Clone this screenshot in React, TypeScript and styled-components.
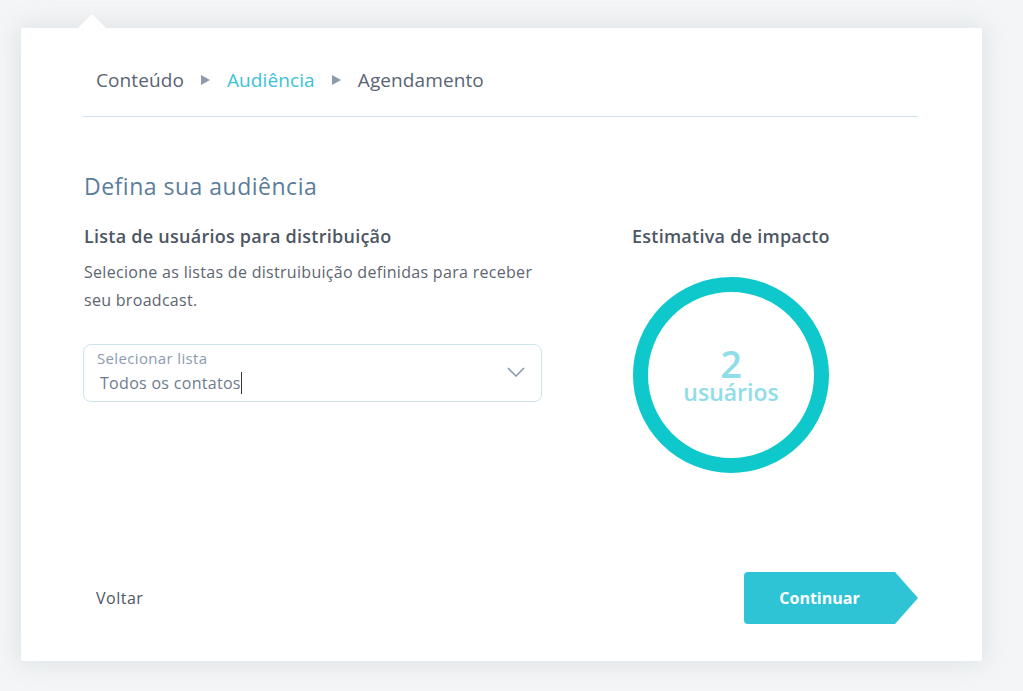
import React from "react";
import styled, { createGlobalStyle } from "styled-components";

const Global = createGlobalStyle`
  html, body { margin: 0; padding: 0; background: #f3f5f6; }
  body { font-family: "Open Sans", "Noto Sans", sans-serif; -webkit-font-smoothing: antialiased; }
  * { box-sizing: border-box; }
`;

const Page = styled.div`
  padding: 28px 0 0 21px;
  width: 1023px;
  height: 691px;
`;

const Card = styled.div`
  position: relative;
  width: 961px;
  height: 633px;
  background: #fff;
  border-radius: 2px;
  box-shadow: 0 0 24px rgba(150, 165, 175, 0.28);
  padding: 40px 64px 37px 62px;
  display: flex;
  flex-direction: column;
  &::before {
    content: "";
    position: absolute;
    left: 57px;
    top: -14px;
    border-left: 14px solid transparent;
    border-right: 14px solid transparent;
    border-bottom: 14px solid #fff;
  }
`;

const Breadcrumb = styled.nav`
  display: flex;
  align-items: center;
  gap: 17px;
  padding: 0 0 24px 13px;
  border-bottom: 1px solid #cfe3ea;
  font-size: 19px;
  line-height: 24px;
  letter-spacing: 0.1px;
`;

const Crumb = styled.span<{ $active?: boolean }>`
  color: ${(p) => (p.$active ? "#3cc2d6" : "#5a6475")};
`;

const Sep = styled.span`
  width: 0;
  height: 0;
  border-top: 5px solid transparent;
  border-bottom: 5px solid transparent;
  border-left: 9px solid #8a9bab;
`;

const Title = styled.h1`
  margin: 54px 0 0 1px;
  font-size: 23px;
  line-height: 30px;
  font-weight: 400;
  letter-spacing: 0.5px;
  color: #5b7d9c;
`;

const Columns = styled.div`
  display: flex;
  margin-top: 23px;
  flex: 1;
`;

const Left = styled.div`
  width: 459px;
  display: flex;
  flex-direction: column;
`;

const Right = styled.div`
  margin-left: 89px;
  display: flex;
  flex-direction: column;
`;

const SubTitle = styled.h2`
  margin: 0 0 0 1px;
  font-size: 18px;
  line-height: 24px;
  font-weight: 600;
  letter-spacing: 0.25px;
  color: #4d5663;
`;

const Desc = styled.p`
  margin: 10px 0 0 1px;
  font-size: 16px;
  line-height: 28px;
  letter-spacing: 0.3px;
  color: #5d6570;
`;

const SelectBox = styled.div`
  position: relative;
  margin-top: 30px;
  height: 58px;
  border: 1px solid #cfe3ea;
  border-radius: 8px;
  padding: 4px 0 0 13px;
`;

const SelectLabel = styled.div`
  font-size: 15px;
  line-height: 19px;
  letter-spacing: 0.35px;
  color: #8b9bb0;
`;

const SelectValue = styled.div`
  display: flex;
  align-items: center;
  margin: 4px 0 0 3px;
  font-size: 16px;
  line-height: 22px;
  letter-spacing: 0.3px;
  color: #6e7b8e;
`;

const Caret = styled.span`
  display: inline-block;
  width: 1px;
  height: 22px;
  background: #333;
`;

const Chevron = styled.svg`
  position: absolute;
  right: 16px;
  top: 22px;
`;

const Circle = styled.div`
  margin-top: 29px;
  margin-left: 2px;
  width: 196px;
  height: 196px;
  border-radius: 50%;
  border: 15px solid #0ec8cc;
  display: flex;
  flex-direction: column;
  align-items: center;
  justify-content: center;
  color: #8fdde9;
`;

const Count = styled.div`
  font-size: 38px;
  line-height: 34px;
  font-weight: 600;
`;

const CountLabel = styled.div`
  font-size: 23px;
  line-height: 24px;
  font-weight: 600;
`;

const Footer = styled.div`
  display: flex;
  align-items: center;
  justify-content: space-between;
`;

const BackButton = styled.button`
  border: none;
  background: none;
  padding: 0 0 0 13px;
  font-family: inherit;
  font-size: 16px;
  letter-spacing: 0.5px;
  color: #4d5663;
  cursor: pointer;
`;

const NextButton = styled.button`
  width: 174px;
  height: 52px;
  border: none;
  border-radius: 4px;
  background: #2ec4d6;
  color: #fff;
  font-family: inherit;
  font-size: 16px;
  font-weight: 700;
  padding: 0 23px 0 0;
  clip-path: polygon(0 0, 151px 0, 174px 50%, 151px 100%, 0 100%);
  cursor: pointer;
`;

export default function App() {
  return (
    <>
      <Global />
      <Page>
        <Card>
          <Breadcrumb>
            <Crumb>Conteúdo</Crumb>
            <Sep />
            <Crumb $active>Audiência</Crumb>
            <Sep />
            <Crumb>Agendamento</Crumb>
          </Breadcrumb>
          <Title>Defina sua audiência</Title>
          <Columns>
            <Left>
              <SubTitle>Lista de usuários para distribuição</SubTitle>
              <Desc>
                Selecione as listas de distruibuição definidas para receber
                <br />
                seu broadcast.
              </Desc>
              <SelectBox>
                <SelectLabel>Selecionar lista</SelectLabel>
                <SelectValue>
                  Todos os contatos
                  <Caret />
                </SelectValue>
                <Chevron width="18" height="10" viewBox="0 0 18 10">
                  <path d="M1 1l8 8 8-8" fill="none" stroke="#8a9bb0" strokeWidth="1.6" />
                </Chevron>
              </SelectBox>
            </Left>
            <Right>
              <SubTitle>Estimativa de impacto</SubTitle>
              <Circle>
                <Count>2</Count>
                <CountLabel>usuários</CountLabel>
              </Circle>
            </Right>
          </Columns>
          <Footer>
            <BackButton>Voltar</BackButton>
            <NextButton>Continuar</NextButton>
          </Footer>
        </Card>
      </Page>
    </>
  );
}
